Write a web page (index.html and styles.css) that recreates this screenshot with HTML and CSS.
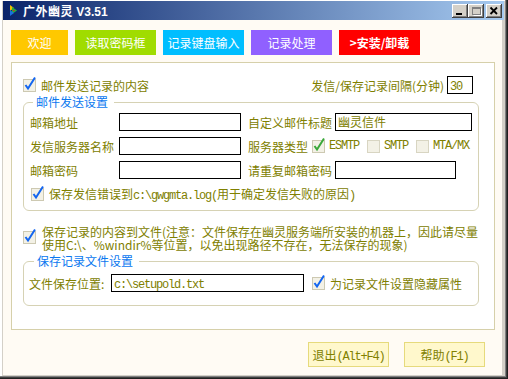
FILE: index.html
```html
<!DOCTYPE html>
<html lang="zh-CN">
<head>
  <meta charset="UTF-8">
  <title>广外幽灵 V3.51</title>
  <link rel="stylesheet" href="styles.css">
</head>
<body>

  <div class="window">
    <div class="titlebar">
      <svg class="app-icon" width="9" height="13" viewBox="0 0 9 13">
        <path d="M1 1 L5 4 L1 7 Z" fill="#f0c000"/>
        <path d="M3 3 L8 6.5 L3 10 Z" fill="#20b040"/>
        <path d="M1 6 L5 9 L1 12 Z" fill="#1870e0"/>
        <path d="M4 5.5 L6 6.5 L4 7.5 Z" fill="#e02020"/>
      </svg>
      <span class="title">广外幽灵 <span class="ver">V3.51</span></span>
      <div class="tbtns">
        <div class="tbtn"><svg width="16" height="14" viewBox="0 0 16 14"><rect x="4" y="9" width="6" height="2" fill="#000"/></svg></div>
        <div class="tbtn"><svg width="16" height="14" viewBox="0 0 16 14"><rect x="4.5" y="3.5" width="8" height="7" fill="none" stroke="#808080"/><rect x="4" y="3" width="9" height="2" fill="#808080"/><path d="M5.5 11.5 H13.5 V4.5" stroke="#fff" fill="none"/></svg></div>
        <div class="tbtn close"><svg width="16" height="14" viewBox="0 0 16 14"><path d="M4.5 3.5 L11 10 M11 3.5 L4.5 10" stroke="#000" stroke-width="1.8"/></svg></div>
      </div>
    </div>

    <div class="client">
      <div class="tabs">
        <div class="tab t-welcome">欢迎</div>
        <div class="tab t-read">读取密码框</div>
        <div class="tab t-key">记录键盘输入</div>
        <div class="tab t-proc">记录处理</div>
        <div class="tab t-install">&gt;安装/卸载</div>
      </div>

      <div class="panel">
        <div class="row-top">
          <span class="check">
            <svg class="cb" width="13" height="13" viewBox="0 0 13 13"><rect x="0.5" y="0.5" width="12" height="12" fill="#f3f1e6" stroke="#cdc9b2"/><path d="M2.5 6 L5 9.5 L12 -1.5" stroke="#1466f0" stroke-width="2" fill="none"/></svg>
            <span class="check-text">邮件发送记录的内容</span>
          </span>
          <span class="interval">发信/保存记录间隔(分钟)</span>
          <div class="field f-interval"><span class="en">30</span></div>
        </div>

        <fieldset class="group mail">
          <legend>邮件发送设置</legend>
          <div class="frow">
            <span class="lbl">邮箱地址</span>
            <div class="field w-mid"></div>
            <span class="lbl2">自定义邮件标题</span>
            <div class="field w-subject">幽灵信件</div>
          </div>
          <div class="frow">
            <span class="lbl">发信服务器名称</span>
            <div class="field w-mid"></div>
            <span class="lbl2 l-type">服务器类型</span>
            <svg class="cb" width="13" height="13" viewBox="0 0 13 13"><rect x="0.5" y="0.5" width="12" height="12" fill="#f3f1e6" stroke="#cdc9b2"/><path d="M2.5 6 L5 9.5 L12 -1.5" stroke="#3aa83a" stroke-width="2" fill="none"/></svg>
            <span class="en opt">ESMTP</span>
            <svg class="cb gap" width="13" height="13" viewBox="0 0 13 13"><rect x="0.5" y="0.5" width="12" height="12" fill="#f3f1e6" stroke="#d8d5c2"/></svg>
            <span class="en opt">SMTP</span>
            <svg class="cb gap" width="13" height="13" viewBox="0 0 13 13"><rect x="0.5" y="0.5" width="12" height="12" fill="#f3f1e6" stroke="#d8d5c2"/></svg>
            <span class="en opt">MTA/MX</span>
          </div>
          <div class="frow">
            <span class="lbl">邮箱密码</span>
            <div class="field w-mid"></div>
            <span class="lbl2">请重复邮箱密码</span>
            <div class="field w-repeat"></div>
          </div>
          <div class="frow last">
            <svg class="cb log-cb" width="13" height="13" viewBox="0 0 13 13"><rect x="0.5" y="0.5" width="12" height="12" fill="#f3f1e6" stroke="#cdc9b2"/><path d="M2.5 6 L5 9.5 L12 -1.5" stroke="#1466f0" stroke-width="2" fill="none"/></svg>
            <span class="log-text">保存发信错误到<span class="en">c:\gwgmta.log(</span>用于确定发信失败的原因<span class="en">)</span></span>
          </div>
        </fieldset>

        <div class="save-note">
          <svg class="cb" width="13" height="13" viewBox="0 0 13 13"><rect x="0.5" y="0.5" width="12" height="12" fill="#f3f1e6" stroke="#cdc9b2"/><path d="M2.5 6 L5 9.5 L12 -1.5" stroke="#1466f0" stroke-width="2" fill="none"/></svg>
          <div class="note-text">
            <div class="note-line">保存记录的内容到文件(注意：文件保存在幽灵服务端所安装的机器上，因此请尽量</div>
            <div class="note-line">使用C:\、%windir%等位置，以免出现路径不存在，无法保存的现象)</div>
          </div>
        </div>

        <fieldset class="group save">
          <legend>保存记录文件设置</legend>
          <div class="frow last">
            <span class="lbl-path">文件保存位置:</span>
            <div class="field w-path"><span class="en">c:\setupold.txt</span></div>
            <svg class="cb hide-cb" width="13" height="13" viewBox="0 0 13 13"><rect x="0.5" y="0.5" width="12" height="12" fill="#f3f1e6" stroke="#cdc9b2"/><path d="M2.5 6 L5 9.5 L12 -1.5" stroke="#1466f0" stroke-width="2" fill="none"/></svg>
            <span class="hide-text">为记录文件设置隐藏属性</span>
          </div>
        </fieldset>
      </div>

      <div class="actions">
        <div class="btn">退出<span class="en">(Alt+F4)</span></div>
        <div class="btn">帮助<span class="en">(F1)</span></div>
      </div>
    </div>
  </div>

</body>
</html>
```

FILE: styles.css
```css
/* General Styles */
* {
  margin: 0;
  padding: 0;
  box-sizing: border-box;
}

body {
  width: 508px;
  height: 379px;
  overflow: hidden;
  font-family: "Noto Sans CJK SC", sans-serif;
  font-size: 12px;
  color: #808000;
}

.en {
  font-family: "Liberation Mono", monospace;
  font-size: 12px;
  letter-spacing: -1.2px;
}

/* Window frame */
.window {
  width: 508px;
  height: 379px;
  background-color: #d4d0c8;
  padding: 1px 6px 4px 3px;
  display: flex;
  flex-direction: column;
  box-shadow: inset -1px -1px #202020, inset -2px -2px #404040, inset -3px -3px #808080, inset 2px 1px #fff;
}

.titlebar {
  height: 19px;
  margin-right: -2px;
  background: linear-gradient(to right, #0a246a, #a6caf0);
  display: flex;
  align-items: center;
  padding-left: 6px;
}

.app-icon {
  display: block;
}

.title {
  margin-left: 5px;
  color: white;
  font-weight: bold;
  letter-spacing: 0.5px;
}

.title .ver {
  font-family: "Liberation Sans", sans-serif;
  letter-spacing: 0;
}

.tbtns {
  margin-left: auto;
  margin-right: 2px;
  display: flex;
}

.tbtn {
  width: 16px;
  height: 14px;
  background-color: #d4d0c8;
  box-shadow: inset -1px -1px #404040, inset 1px 1px #fff, inset -2px -2px #808080;
}

.tbtn svg {
  display: block;
}

.tbtn.close {
  margin-left: 2px;
}

.client {
  flex: 1;
  background-color: #fffbf4;
  padding: 10px 0 0 8px;
}

/* Tabs */
.tabs {
  display: flex;
  gap: 7px;
}

.tab {
  width: 81px;
  height: 25px;
  line-height: 25px;
  text-align: center;
  color: white;
}

.t-welcome {
  width: 57px;
  background-color: #ffc800;
}

.t-read {
  background-color: #a0dc00;
}

.t-key {
  background-color: #00beff;
}

.t-proc {
  background-color: #9060ff;
}

.t-install {
  background-color: #ff0000;
  font-weight: bold;
}

/* Main panel */
.panel {
  margin-top: 7px;
  width: 484px;
  height: 268px;
  background-color: white;
  border: 1px solid #d6d0aa;
  padding: 0 15px 0 11px;
}

.row-top {
  margin-top: 13px;
  height: 18px;
  display: flex;
  align-items: center;
  padding-right: 6px;
}

.check {
  display: flex;
  align-items: center;
}

.cb {
  display: block;
  flex: none;
  overflow: visible;
}

.check-text {
  margin-left: 5px;
}

.interval {
  margin-left: auto;
  margin-right: 3px;
}

.field {
  height: 18px;
  border: 1px solid #000;
  background-color: white;
  padding-left: 2px;
  line-height: 16px;
  color: #808000;
  white-space: nowrap;
}

.f-interval {
  width: 26px;
}

/* Group boxes */
.group {
  border: 1px solid #d6d2b4;
  border-radius: 6px;
  margin-top: 1px;
}

.group legend {
  line-height: 14px;
  color: #0a78f0;
  margin-left: 3px;
  padding: 0 6px 0 3px;
}

.mail {
  padding: 4px 0 7px 6px;
}

.frow {
  display: flex;
  align-items: center;
  height: 18px;
  margin-bottom: 6px;
  white-space: nowrap;
}

.frow.last {
  margin-bottom: 0;
}

.lbl {
  width: 89px;
}

.lbl2 {
  width: 87px;
  margin-left: 7px;
}

.l-type {
  width: 64px;
}

.w-mid {
  width: 122px;
}

.w-subject {
  width: 137px;
}

.w-repeat {
  width: 121px;
}

.opt {
  margin-left: 4px;
}

.cb.gap {
  margin-left: 8px;
}

.log-cb {
  margin-left: 1px;
}

.log-text {
  margin-left: 5px;
}

.save-note {
  margin-top: 14px;
  display: flex;
  align-items: flex-start;
}

.save-note .cb {
  margin-top: 6px;
}

.note-text {
  margin-left: 6px;
}

.note-line {
  height: 13px;
  line-height: 13px;
  white-space: nowrap;
}

.save {
  margin-top: 3px;
  padding: 6px 0 13px 5px;
}

.save legend {
  margin-left: 5px;
}

.lbl-path {
  width: 82px;
}

.w-path {
  width: 193px;
}

.hide-cb {
  margin-left: 8px;
}

.hide-text {
  margin-left: 5px;
}

/* Bottom buttons */
.actions {
  margin-top: 12px;
  display: flex;
  justify-content: flex-end;
  gap: 15px;
  padding-right: 17px;
}

.btn {
  width: 81px;
  height: 25px;
  line-height: 23px;
  text-align: center;
  background-color: #fff8cc;
  border: 1px solid #e6da7c;
  cursor: pointer;
}
```
